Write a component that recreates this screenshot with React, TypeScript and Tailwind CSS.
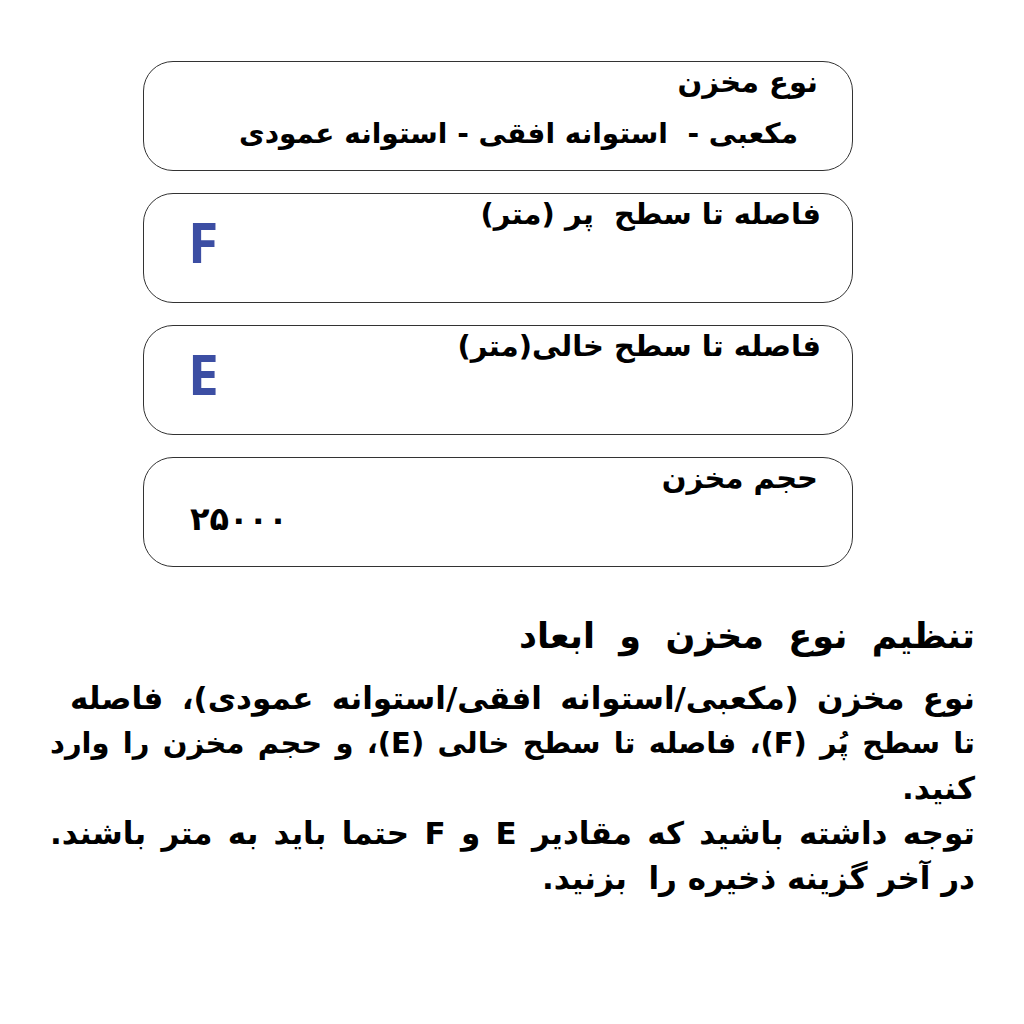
import React from "react";

const fa = "font-['DejaVu_Sans',sans-serif] font-bold whitespace-pre";

type Field = {
  title: string;
  value: string;
};

const fields: Field[] = [
  { title: "فاصله تا سطح  پر (متر)", value: "F" },
  { title: "فاصله تا سطح خالی(متر)", value: "E" },
];

const Card: React.FC<{ children: React.ReactNode }> = ({ children }) => (
  <div className="h-[110px] rounded-[30px] border-[1.5px] border-[#333] bg-white">{children}</div>
);

// lines that run the full measure are stretched edge to edge
const fill = "whitespace-nowrap text-justify [text-align-last:justify]";

export default function App() {
  return (
    <div className="min-h-screen w-[1024px] bg-white pt-[61px]">
      <div className="ml-[143px] flex w-[710px] flex-col gap-[22px]">
        {/* tank type */}
        <Card>
          <div dir="rtl" className={`${fa} px-[34px] text-[29px] leading-[40px] text-black`}>
            <div>نوع مخزن</div>
            <div className="mt-[12px] pr-[20px] text-[28px]">مکعبی -  استوانه افقی - استوانه عمودی</div>
          </div>
        </Card>

        {fields.map((f) => (
          <Card key={f.value}>
            <div className="flex flex-col px-[31px]">
              <div dir="rtl" className={`${fa} text-[29px] leading-[40px] text-black`}>
                {f.title}
              </div>
              <div className="-mt-[19px] pl-[13px] font-['Open_Sans',sans-serif] text-[55px] font-bold leading-[54px] text-[#3c4ea3]">
                {f.value}
              </div>
            </div>
          </Card>
        ))}

        {/* volume */}
        <Card>
          <div className={`${fa} flex flex-col px-[34px] text-[29px] leading-[40px] text-black`}>
            <div dir="rtl">حجم مخزن</div>
            <div className="mt-[1px] pl-[12px] text-[32px]">۲۵۰۰۰</div>
          </div>
        </Card>
      </div>

      {/* help text */}
      <div dir="rtl" className={`${fa} mt-[44px] ml-[50px] w-[925px] text-black`}>
        <div className="text-[35px] leading-[50px]">تنظیم  نوع  مخزن  و  ابعاد</div>
        <div className="mt-[15px] text-[31px] leading-[45px]">
          <div className={`${fill} pl-[20px]`}>نوع مخزن (مکعبی/استوانه افقی/استوانه عمودی)، فاصله</div>
          <div className={`${fill} text-[29px]`}>تا سطح پُر (F)، فاصله تا سطح خالی (E)، و حجم مخزن را وارد</div>
          <div>کنید.</div>
          <div className={fill}>توجه داشته باشید که  مقادیر E و F حتما باید به  متر باشند.</div>
          <div>در آخر گزینه ذخیره را  بزنید.</div>
        </div>
      </div>
    </div>
  );
}
